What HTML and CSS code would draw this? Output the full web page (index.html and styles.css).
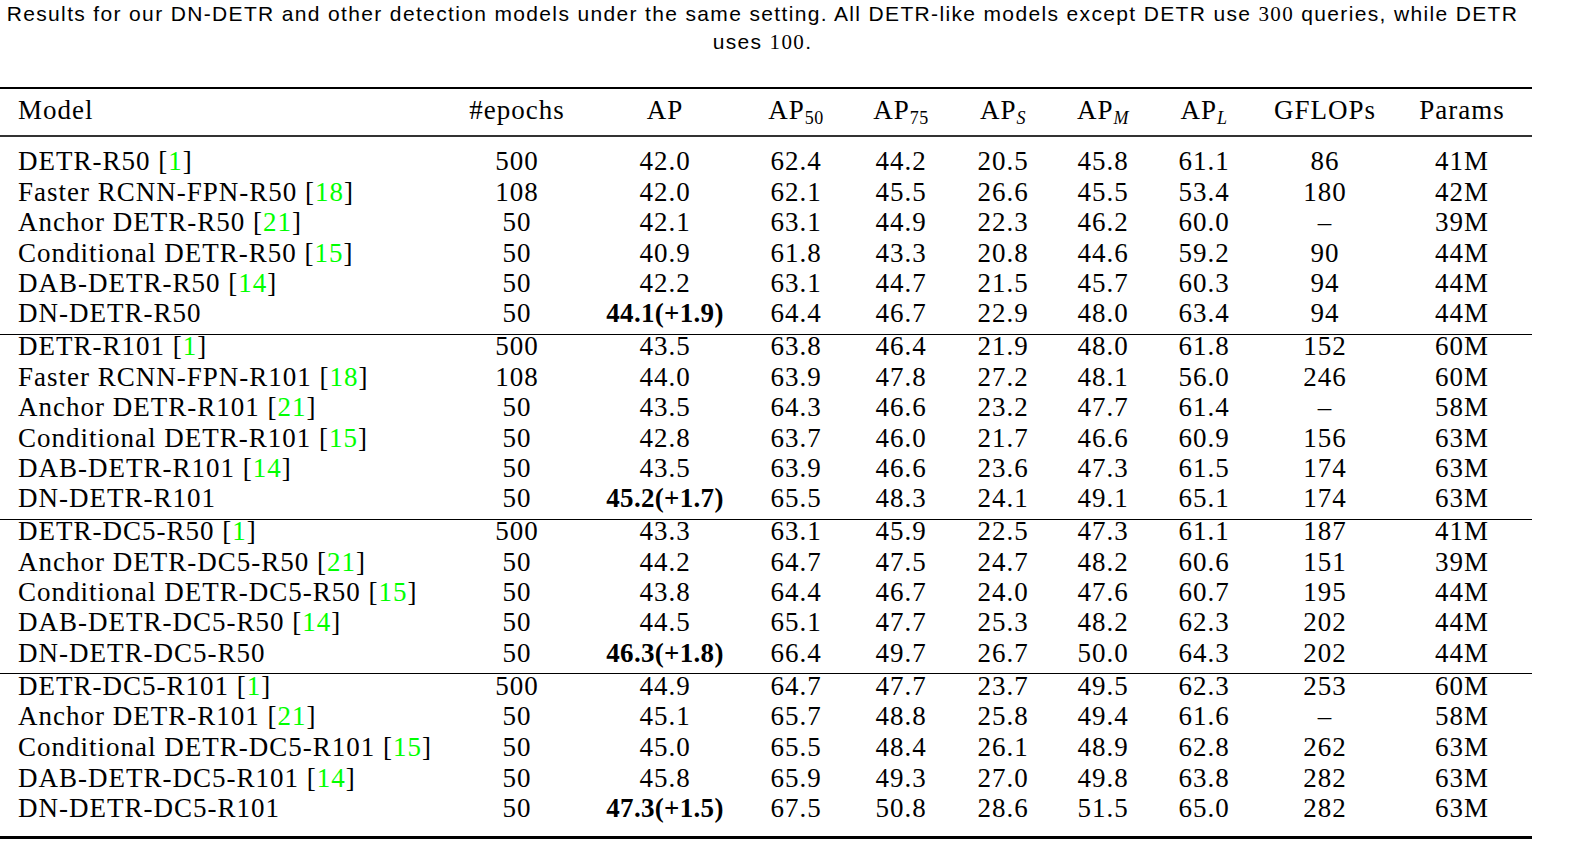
FILE: index.html
```html
<!DOCTYPE html>
<html>
<head>
<meta charset="utf-8">
<link rel="stylesheet" href="styles.css">
</head>
<body>
<div class="page">
  <p class="caption">Results for our DN-DETR and other detection models under the same setting. All DETR-like models except DETR use <span class="cnum">300</span> queries, while DETR uses <span class="cnum">100</span>.</p>
  <div class="table">
    <div class="row head">
      <div class="name">Model</div>
      <div>#epochs</div>
      <div>AP</div>
      <div>AP<sub>50</sub></div>
      <div>AP<sub>75</sub></div>
      <div>AP<sub><i>S</i></sub></div>
      <div>AP<sub><i>M</i></sub></div>
      <div>AP<sub><i>L</i></sub></div>
      <div>GFLOPs</div>
      <div>Params</div>
    </div>
    <div class="section first">
      <div class="row"><div class="name">DETR-R50 [<span class="ref">1</span>]</div><div>500</div><div>42.0</div><div>62.4</div><div>44.2</div><div>20.5</div><div>45.8</div><div>61.1</div><div>86</div><div>41M</div></div>
      <div class="row"><div class="name">Faster RCNN-FPN-R50 [<span class="ref">18</span>]</div><div>108</div><div>42.0</div><div>62.1</div><div>45.5</div><div>26.6</div><div>45.5</div><div>53.4</div><div>180</div><div>42M</div></div>
      <div class="row"><div class="name">Anchor DETR-R50 [<span class="ref">21</span>]</div><div>50</div><div>42.1</div><div>63.1</div><div>44.9</div><div>22.3</div><div>46.2</div><div>60.0</div><div>–</div><div>39M</div></div>
      <div class="row"><div class="name">Conditional DETR-R50 [<span class="ref">15</span>]</div><div>50</div><div>40.9</div><div>61.8</div><div>43.3</div><div>20.8</div><div>44.6</div><div>59.2</div><div>90</div><div>44M</div></div>
      <div class="row"><div class="name">DAB-DETR-R50 [<span class="ref">14</span>]</div><div>50</div><div>42.2</div><div>63.1</div><div>44.7</div><div>21.5</div><div>45.7</div><div>60.3</div><div>94</div><div>44M</div></div>
      <div class="row"><div class="name">DN-DETR-R50</div><div>50</div><div class="best">44.1(+1.9)</div><div>64.4</div><div>46.7</div><div>22.9</div><div>48.0</div><div>63.4</div><div>94</div><div>44M</div></div>
    </div>
    <div class="section">
      <div class="row"><div class="name">DETR-R101 [<span class="ref">1</span>]</div><div>500</div><div>43.5</div><div>63.8</div><div>46.4</div><div>21.9</div><div>48.0</div><div>61.8</div><div>152</div><div>60M</div></div>
      <div class="row"><div class="name">Faster RCNN-FPN-R101 [<span class="ref">18</span>]</div><div>108</div><div>44.0</div><div>63.9</div><div>47.8</div><div>27.2</div><div>48.1</div><div>56.0</div><div>246</div><div>60M</div></div>
      <div class="row"><div class="name">Anchor DETR-R101 [<span class="ref">21</span>]</div><div>50</div><div>43.5</div><div>64.3</div><div>46.6</div><div>23.2</div><div>47.7</div><div>61.4</div><div>–</div><div>58M</div></div>
      <div class="row"><div class="name">Conditional DETR-R101 [<span class="ref">15</span>]</div><div>50</div><div>42.8</div><div>63.7</div><div>46.0</div><div>21.7</div><div>46.6</div><div>60.9</div><div>156</div><div>63M</div></div>
      <div class="row"><div class="name">DAB-DETR-R101 [<span class="ref">14</span>]</div><div>50</div><div>43.5</div><div>63.9</div><div>46.6</div><div>23.6</div><div>47.3</div><div>61.5</div><div>174</div><div>63M</div></div>
      <div class="row"><div class="name">DN-DETR-R101</div><div>50</div><div class="best">45.2(+1.7)</div><div>65.5</div><div>48.3</div><div>24.1</div><div>49.1</div><div>65.1</div><div>174</div><div>63M</div></div>
    </div>
    <div class="section">
      <div class="row"><div class="name">DETR-DC5-R50 [<span class="ref">1</span>]</div><div>500</div><div>43.3</div><div>63.1</div><div>45.9</div><div>22.5</div><div>47.3</div><div>61.1</div><div>187</div><div>41M</div></div>
      <div class="row"><div class="name">Anchor DETR-DC5-R50 [<span class="ref">21</span>]</div><div>50</div><div>44.2</div><div>64.7</div><div>47.5</div><div>24.7</div><div>48.2</div><div>60.6</div><div>151</div><div>39M</div></div>
      <div class="row"><div class="name">Conditional DETR-DC5-R50 [<span class="ref">15</span>]</div><div>50</div><div>43.8</div><div>64.4</div><div>46.7</div><div>24.0</div><div>47.6</div><div>60.7</div><div>195</div><div>44M</div></div>
      <div class="row"><div class="name">DAB-DETR-DC5-R50 [<span class="ref">14</span>]</div><div>50</div><div>44.5</div><div>65.1</div><div>47.7</div><div>25.3</div><div>48.2</div><div>62.3</div><div>202</div><div>44M</div></div>
      <div class="row"><div class="name">DN-DETR-DC5-R50</div><div>50</div><div class="best">46.3(+1.8)</div><div>66.4</div><div>49.7</div><div>26.7</div><div>50.0</div><div>64.3</div><div>202</div><div>44M</div></div>
    </div>
    <div class="section last">
      <div class="row"><div class="name">DETR-DC5-R101 [<span class="ref">1</span>]</div><div>500</div><div>44.9</div><div>64.7</div><div>47.7</div><div>23.7</div><div>49.5</div><div>62.3</div><div>253</div><div>60M</div></div>
      <div class="row"><div class="name">Anchor DETR-R101 [<span class="ref">21</span>]</div><div>50</div><div>45.1</div><div>65.7</div><div>48.8</div><div>25.8</div><div>49.4</div><div>61.6</div><div>–</div><div>58M</div></div>
      <div class="row"><div class="name">Conditional DETR-DC5-R101 [<span class="ref">15</span>]</div><div>50</div><div>45.0</div><div>65.5</div><div>48.4</div><div>26.1</div><div>48.9</div><div>62.8</div><div>262</div><div>63M</div></div>
      <div class="row"><div class="name">DAB-DETR-DC5-R101 [<span class="ref">14</span>]</div><div>50</div><div>45.8</div><div>65.9</div><div>49.3</div><div>27.0</div><div>49.8</div><div>63.8</div><div>282</div><div>63M</div></div>
      <div class="row"><div class="name">DN-DETR-DC5-R101</div><div>50</div><div class="best">47.3(+1.5)</div><div>67.5</div><div>50.8</div><div>28.6</div><div>51.5</div><div>65.0</div><div>282</div><div>63M</div></div>
    </div>
  </div>
</div>
</body>
</html>
```

FILE: styles.css
```css
html, body {
  margin: 0;
  padding: 0;
  background: #ffffff;
  color: #000000;
}

.page {
  width: 1532px;
}

.caption {
  margin: 0;
  width: 1525px;
  font-family: "Liberation Sans", Arial, sans-serif;
  font-size: 21px;
  letter-spacing: 1.35px;
  line-height: 27px;
  text-align: center;
}

.cnum {
  font-family: "Liberation Serif", "Times New Roman", serif;
}

.table {
  margin-top: 31px;
  width: 1532px;
  border-top: 2px solid #000;
  border-bottom: 3px solid #000;
  font-family: "Liberation Serif", "Times New Roman", serif;
  font-size: 27px;
  letter-spacing: 1px;
}

.row {
  display: grid;
  grid-template-columns: 444px 146px 150px 112px 98px 106px 94px 108px 134px 140px;
  height: 30.4px;
  line-height: 30.4px;
  text-align: center;
  white-space: nowrap;
}

.row .name {
  text-align: left;
  padding-left: 18px;
}

.row.head {
  height: auto;
  padding-top: 6px;
  padding-bottom: 10px;
  border-bottom: 2px solid #333;
}

.row sub {
  font-size: 18px;
  line-height: 0;
  vertical-align: -5px;
  letter-spacing: 0.5px;
}

.row sub i {
  font-style: italic;
}

.section {
  border-top: 1px solid #000;
  padding-bottom: 4.8px;
}

.section .row:first-child {
  margin-top: -3.2px;
}

.section.first {
  border-top: none;
  padding-top: 9px;
}

.section.first .row:first-child {
  margin-top: 0;
}

.section.last .row {
  height: 30.6px;
}

.section.last {
  padding-bottom: 12.5px;
}

.ref {
  color: #00ff00;
}

.best {
  font-weight: bold;
  letter-spacing: 0.3px;
}
```
